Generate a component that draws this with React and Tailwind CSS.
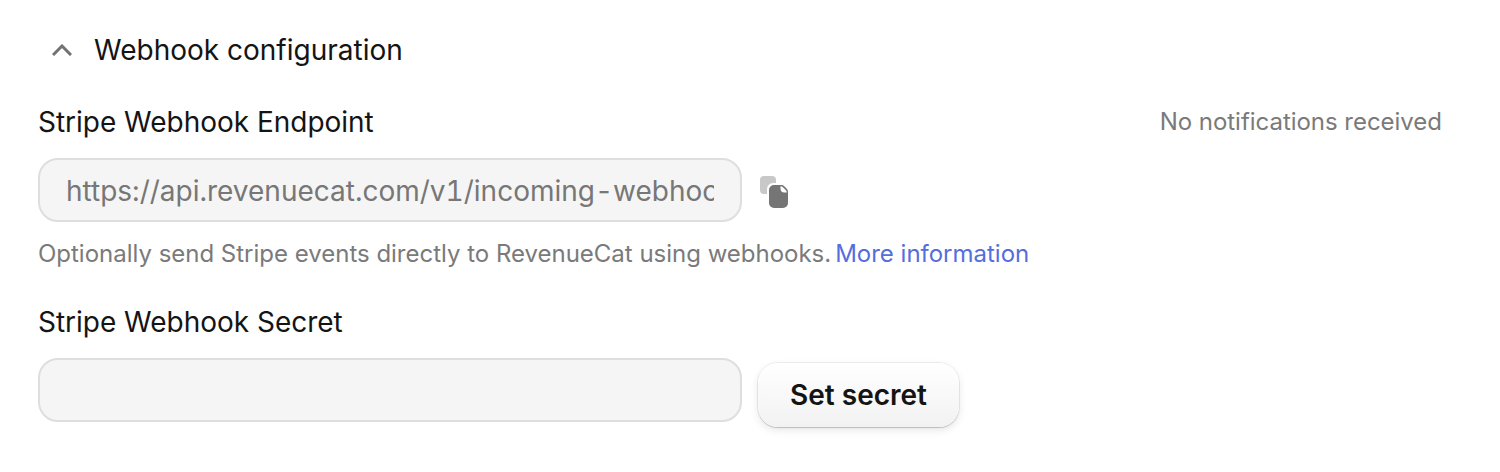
function CopyIcon() {
  return (
    <svg width="28" height="32" viewBox="0 0 28 32">
      <path d="M4 0h8a4 4 0 0 1 4 4v3h-3a6 6 0 0 0-6 6v5H4a4 4 0 0 1-4-4V4a4 4 0 0 1 4-4Z" fill="#c8c8c8" />
      <path d="M14 9h7.500a4 4 0 0 1 2.800 1.200l2.500 2.500A4 4 0 0 1 28 15.500V27a5 5 0 0 1-5 5h-9a5 5 0 0 1-5-5V14a5 5 0 0 1 5-5Z" fill="#757575" />
      <path d="M20.500 10.200c.8 0 1.600.300 2.200.9l3.200 3.200c.6.600.9 1.400.9 2.200h-2.300a4 4 0 0 1-4-4Z" fill="#fff" />
    </svg>
  );
}

export default function App() {
  return (
    <main className="flex h-[472px] w-[1500px] flex-col bg-white pl-[38px] pr-[58px] pt-[30px] font-['Inter',sans-serif] text-[28px] leading-10 text-[#141414]">
      <div className="flex items-center gap-[22px] pl-[14px]">
        <svg width="20" height="12" viewBox="0 0 20 12" fill="none" stroke="#737373" strokeWidth="3"><path d="M1 11 10 2l9 9" /></svg>
        <h2>Webhook configuration</h2>
      </div>
      <div className="mt-8 flex items-center justify-between">
        <label htmlFor="endpoint" className="tracking-[-0.02px]">Stripe Webhook Endpoint</label>
        <span className="text-[24px] tracking-[-0.03px] text-[#7a7a7a]">No notifications received</span>
      </div>
      <div className="mt-4 flex items-center gap-[18px]">
        <input id="endpoint" readOnly value="https://api.revenuecat.com/v1/incoming-webhooks" className="h-16 w-[704px] rounded-[20px] border-2 border-[#dedede] bg-[#f5f5f5] px-[26px] pt-[2px] tabular-nums text-[#777]" />
        <button aria-label="Copy" className="mt-1">
          <CopyIcon />
        </button>
      </div>
      <p className="mt-3 text-[24px] tracking-[-0.01px] text-[#7a7a7a]">Optionally send Stripe events directly to RevenueCat using webhooks.<a className="ml-1 text-[#566ddd]">More information</a></p>
      <label htmlFor="secret" className="mt-7 tracking-[-0.02px]">Stripe Webhook Secret</label>
      <div className="mt-4 flex gap-4">
        <input id="secret" readOnly value="" className="h-16 w-[704px] rounded-[20px] border-2 border-[#dedede] bg-[#f5f5f5] px-[26px]" />
        <button className="mt-[5px] h-16 w-[201px] rounded-[20px] bg-linear-to-b from-white to-[#f2f2f2] font-semibold shadow-[0_0_0_1px_#0000000f,0_1px_1px_#00000026,0_3px_8px_#0000001a]">Set secret</button>
      </div>
    </main>
  );
}
